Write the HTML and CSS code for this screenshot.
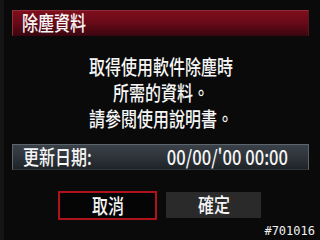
FILE: index.html
```html
<!DOCTYPE html>
<html lang="zh-Hant">
<head>
<meta charset="utf-8">
<link rel="stylesheet" href="styles.css">
</head>
<body>
<div class="screen">
  <div class="title"><span class="sq left">除塵資料</span></div>
  <div class="message">
    <div class="line"><span class="sq">取得使用軟件除塵時</span></div>
    <div class="line"><span class="sq">所需的資料。</span></div>
    <div class="line"><span class="sq">請參閱使用說明書。</span></div>
  </div>
  <div class="datebar">
    <span class="sq left">更新日期:</span>
    <span class="sq digits">00/00/'00 00:00</span>
  </div>
  <div class="buttons">
    <div class="btn cancel"><span class="sq">取消</span></div>
    <div class="btn ok"><span class="sq">確定</span></div>
  </div>
  <div class="code">#701016</div>
</div>
</body>
</html>
```
FILE: styles.css
```css
html, body {
  margin: 0;
  padding: 0;
  background: #0a0a0a;
}
.screen {
  position: relative;
  width: 320px;
  height: 240px;
  box-sizing: border-box;
  padding: 10px 11px 0 12px;
  display: flex;
  flex-direction: column;
  font-family: "Noto Sans CJK TC", "Noto Sans", sans-serif;
  font-weight: 500;
  color: #f6f6f6;
  font-size: 20px;
  background: linear-gradient(to right, #151515 0, #151515 4px, #0a0a0a 4px);
}
.sq {
  display: inline-block;
  transform: scaleX(0.8);
  white-space: nowrap;
}
.sq.left { transform-origin: left center; }
.sq.digits {
  transform: scaleX(0.83);
  transform-origin: right center;
}
.title {
  height: 26px;
  box-sizing: border-box;
  border: 1px solid #8e2c3a;
  border-right-color: #5a1420;
  border-bottom-color: #3a0610;
  background: linear-gradient(to bottom, #800e1c 0%, #680a18 50%, #3c0610 100%);
  display: flex;
  align-items: center;
  padding-left: 9px;
  line-height: 26px;
}
.message {
  margin-top: 18px;
  display: flex;
  flex-direction: column;
  align-items: center;
  line-height: 26px;
}
.datebar {
  margin-top: 12px;
  height: 26px;
  box-sizing: border-box;
  border: 1px solid #5c646c;
  border-bottom-color: #30363c;
  background: linear-gradient(to bottom, #3a4148 0%, #2c3238 55%, #1e2328 100%);
  display: flex;
  align-items: center;
  justify-content: space-between;
  padding: 0 20px 0 10px;
  line-height: 24px;
}
.buttons {
  margin-top: 21px;
  display: flex;
  gap: 9px;
  padding-left: 46px;
}
.btn {
  box-sizing: border-box;
  display: flex;
  align-items: center;
  justify-content: center;
  line-height: 24px;
}
.cancel {
  width: 99px;
  height: 29px;
  border: 2px solid #b0121c;
  background: #050505;
}
.ok {
  width: 95px;
  height: 26px;
  margin-top: 1px;
  background: #2a2a2a;
}
.code {
  position: absolute;
  right: 5px;
  bottom: 3px;
  font-family: "DejaVu Sans Mono", monospace;
  font-weight: normal;
  font-size: 12px;
  line-height: 12px;
  color: #f0f0f0;
}
```
